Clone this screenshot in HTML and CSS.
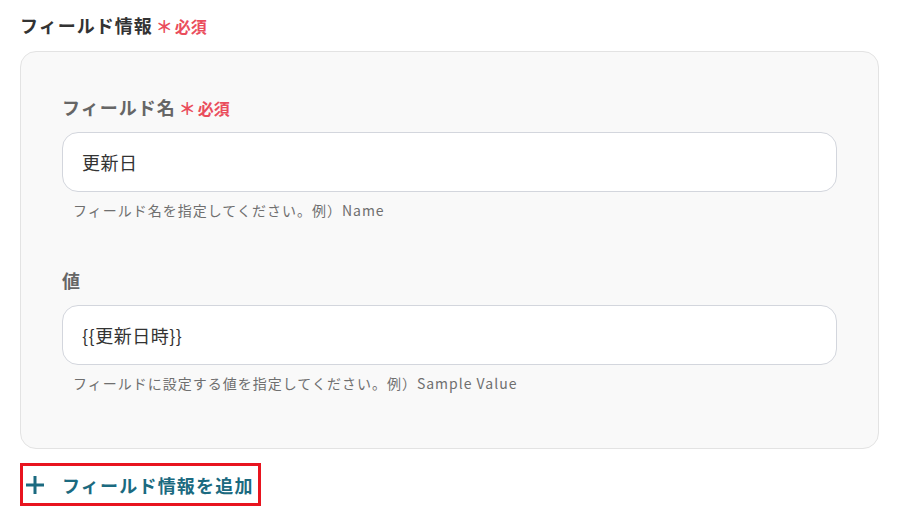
FILE: index.html
```html
<!DOCTYPE html>
<html lang="ja">
<head>
<meta charset="utf-8">
<link rel="stylesheet" href="styles.css">
</head>
<body>
<div class="page">
  <div class="section-title">フィールド情報<span class="req"><span class="star">＊</span>必須</span></div>
  <div class="panel">
    <div class="field">
      <div class="label">フィールド名<span class="req"><span class="star">＊</span>必須</span></div>
      <div class="input">更新日</div>
      <div class="help">フィールド名を指定してください。例）Name</div>
    </div>
    <div class="field">
      <div class="label">値</div>
      <div class="input">{{更新日時}}</div>
      <div class="help">フィールドに設定する値を指定してください。例）Sample Value</div>
    </div>
  </div>
  <div class="add">
    <svg class="plus" width="20" height="20" viewBox="0 0 20 20"><path d="M10 1v18M1 10h18" stroke="#1b6a80" stroke-width="3" fill="none"/></svg>
    <span>フィールド情報を追加</span>
  </div>
</div>
</body>
</html>
```
FILE: styles.css
```css
html, body { margin: 0; padding: 0; background: #fff; }
body { font-family: "Noto Sans CJK JP", "Noto Sans", sans-serif; color: #333; }
.page { padding: 12px 20px 0 20px; }
.section-title { font-size: 18px; font-weight: 700; letter-spacing: 1px; line-height: 26px; height: 26px; color: #333; }
.req { font-size: 16px; color: #ea4d5c; font-weight: 700; letter-spacing: 0; margin-left: 3px; line-height: 1; }
.star { font-size: 17px; margin-right: 2px; line-height: 1; }
.panel { margin-top: 13px; background: #f9f9f9; border: 1px solid #e3e3e3; border-radius: 16px; padding: 42px 41px 55px 41px; display: flex; flex-direction: column; gap: 47px; }
.label { font-size: 18px; font-weight: 700; letter-spacing: 1px; color: #666; line-height: 26px; height: 26px; }
.input { margin-top: 12px; height: 58px; background: #fff; border: 1px solid #d3d6dd; border-radius: 16px; padding: 0 19px; display: flex; align-items: center; font-size: 18px; letter-spacing: 0.5px; color: #333; }
.help { margin-top: 8px; padding-left: 11px; font-size: 14px; letter-spacing: 1px; color: #6f6f6f; line-height: 20px; }
.add { margin-top: 14px; width: 235px; height: 37px; border: 3px solid #e8141f; display: flex; align-items: center; color: #1b6a80; font-size: 18px; font-weight: 700; letter-spacing: 1.2px; }
.plus { margin-left: 2px; margin-right: 17px; }
```
